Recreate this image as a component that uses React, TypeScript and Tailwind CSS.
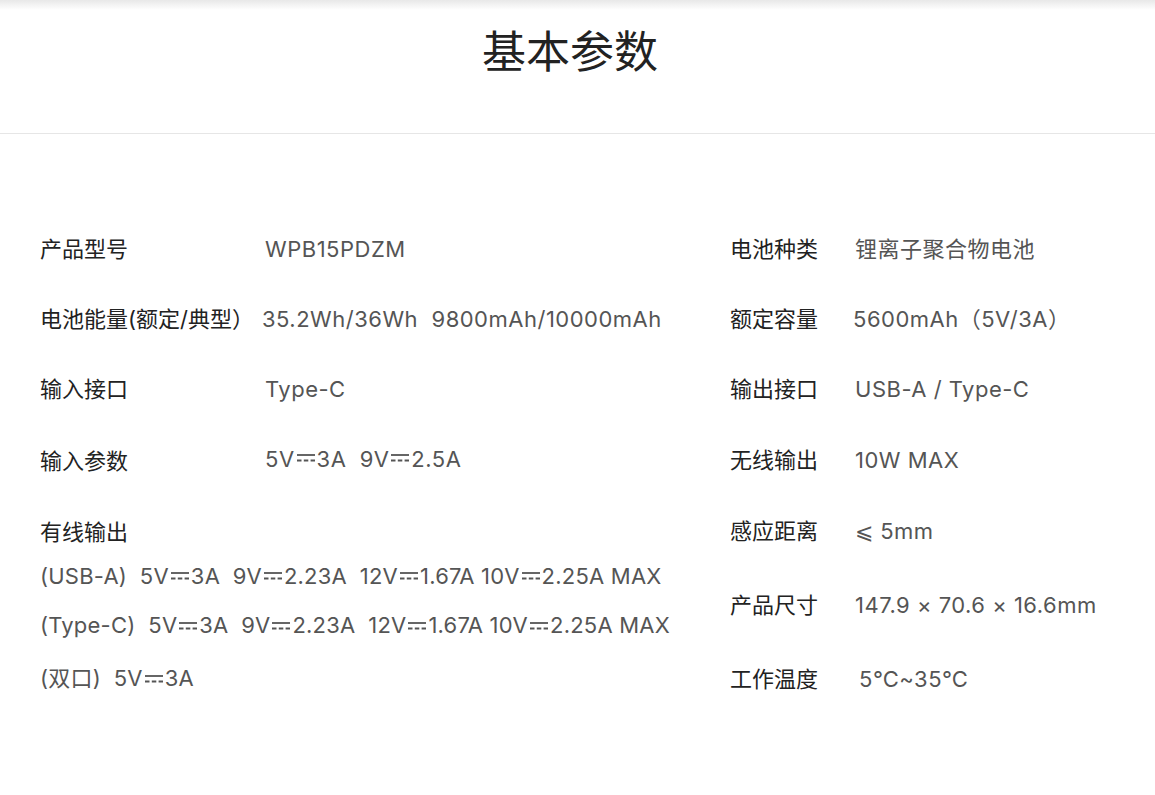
import React from 'react';

const FONT = 'font-[Inter,"Noto_Sans_CJK_SC",sans-serif]';

const Dc = () => (
    <svg width="20" height="10" viewBox="0 0 20 10" className="inline-block mx-[1px] align-[4px]">
        <line x1="1" y1="2" x2="19" y2="2" stroke="currentColor" strokeWidth="1.8" />
        <line x1="1" y1="7.5" x2="19" y2="7.5" stroke="currentColor" strokeWidth="1.8" strokeDasharray="4.5 2.3" />
    </svg>
);

const Row = ({ label, children, h = 'h-[70px]', valueClass = '' }: { label: string; children: React.ReactNode; h?: string; valueClass?: string }) => (
    <div className={`flex items-center ${h}`}>
        <div className="text-[#222] text-[22px] shrink-0">{label}</div>
        <div className={`text-[#555] text-[22px] tracking-[0.5px] ${valueClass}`}>{children}</div>
    </div>
);

export default function App() {
    return (
        <div className={`w-[1155px] h-[795px] bg-white ${FONT}`}>
            <div className="h-[10px] bg-gradient-to-b from-[#e8e8e8] to-white" />
            <div className="h-[124px] border-b border-[#e6e6e6] flex justify-center pr-[15px]">
                <h1 className="text-[44px] text-[#222] leading-none mt-[20px]">基本参数</h1>
            </div>

            <div className="flex pl-[40px] pt-[80px]">
                {/* left column */}
                <div className="w-[690px]">
                    <Row label="产品型号" valueClass="pl-[137px]">WPB15PDZM</Row>
                    <Row label="电池能量(额定/典型）" valueClass="pl-[8px]">35.2Wh/36Wh&nbsp; 9800mAh/10000mAh</Row>
                    <Row label="输入接口" valueClass="pl-[137px]">Type-C</Row>
                    <Row label="输入参数" h="h-[75px]" valueClass="pl-[137px] -mt-[4px]">
                        5V<Dc />3A&nbsp; 9V<Dc />2.5A
                    </Row>
                    <div className="flex items-center h-[66px]">
                        <div className="text-[#222] text-[22px]">有线输出</div>
                    </div>
                    <div className="text-[#555] text-[22px] tracking-[0.01em] -mt-[12px]">
                        <div className="h-[46px] flex items-center">(USB-A)&nbsp; 5V<Dc />3A&nbsp; 9V<Dc />2.23A&nbsp; 12V<Dc />1.67A 10V<Dc />2.25A MAX</div>
                        <div className="h-[53px] flex items-center">(Type-C)&nbsp; 5V<Dc />3A&nbsp; 9V<Dc />2.23A&nbsp; 12V<Dc />1.67A 10V<Dc />2.25A MAX</div>
                        <div className="h-[53px] flex items-center">(双口)&nbsp; 5V<Dc />3A</div>
                    </div>
                </div>

                {/* right column */}
                <div className="flex-1">
                    <Row label="电池种类" valueClass="pl-[37px]">锂离子聚合物电池</Row>
                    <Row label="额定容量" valueClass="pl-[35px]">5600mAh（5V/3A）</Row>
                    <Row label="输出接口" valueClass="pl-[37px]">USB-A / Type-C</Row>
                    <Row label="无线输出" h="h-[73px]" valueClass="pl-[37px]">10W MAX</Row>
                    <Row label="感应距离" h="h-[68px]" valueClass="pl-[37px]">⩽ 5mm</Row>
                    <Row label="产品尺寸" h="h-[80px]" valueClass="pl-[37px]">147.9 × 70.6 × 16.6mm</Row>
                    <Row label="工作温度" h="h-[68px]" valueClass="pl-[41px]">5℃~35℃</Row>
                </div>
            </div>
        </div>
    );
}
